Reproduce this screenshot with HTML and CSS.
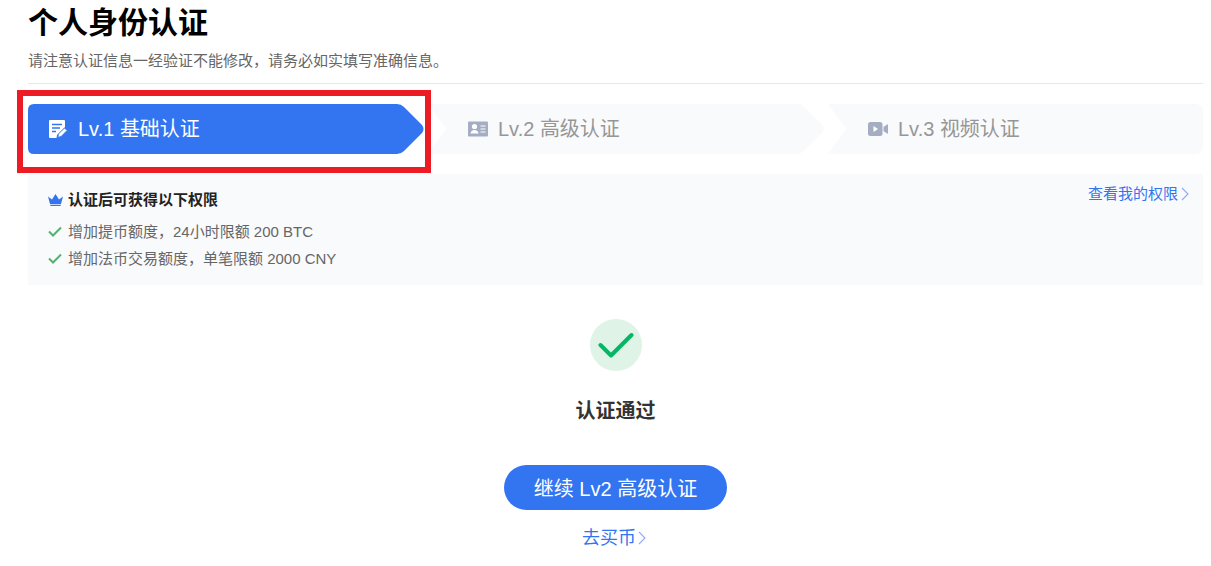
FILE: index.html
```html
<!DOCTYPE html>
<html lang="zh-CN">
<head>
<meta charset="utf-8">
<title>个人身份认证</title>
<link rel="stylesheet" href="styles.css">
</head>
<body>
<main class="page">
  <h1 class="title">个人身份认证</h1>
  <p class="subtitle">请注意认证信息一经验证不能修改，请务必如实填写准确信息。</p>
  <div class="steps">
    <div class="step step-first active">
      <svg class="step-bg" viewBox="0 0 397 50" preserveAspectRatio="none"><path fill="#3375f0" d="M6 0H369Q373 0 376 3L394 21Q397 25 394 29L376 47Q373 50 369 50H6Q0 50 0 44V6Q0 0 6 0Z"/></svg>
      <svg class="step-icon" viewBox="0 0 18 18"><path fill="#fff" d="M1 0H15Q16 0 16 1V7L8 15 7.500 18H1Q0 18 0 17V1Q0 0 1 0Z"/><path stroke="#3375f0" stroke-width="1.300" d="M3 4.500H13M3 8H11M3 11.500H7"/><path fill="#fff" stroke="#3375f0" stroke-width=".7" d="M9.500 14 15.500 8 18 10.500 12 16.500 9 17.200Z"/></svg>
      <span>Lv.1 基础认证</span>
    </div>
    <div class="step">
      <svg class="step-bg" viewBox="0 0 397 50" preserveAspectRatio="none"><path fill="#f9fafc" d="M0 0H369Q373 0 376 3L394 21Q397 25 394 29L376 47Q373 50 369 50H0L18 25Z"/></svg>
      <svg class="step-icon" viewBox="0 0 20 15"><rect width="20" height="15" rx="1" fill="#a4adc2"/><circle cx="6.500" cy="5" r="2.600" fill="#fff"/><path fill="#fff" d="M2.500 12Q3 8.500 6.500 8.500T10.500 12Z"/><path stroke="#fff" stroke-width="1.200" d="M12.500 4.500H17.500M12.500 7.500H17.500M12.500 10.500H17.500"/></svg>
      <span>Lv.2 高级认证</span>
    </div>
    <div class="step step-last">
      <svg class="step-bg" viewBox="0 0 375 50" preserveAspectRatio="none"><path fill="#f9fafc" d="M0 0H367Q375 0 375 8V42Q375 50 367 50H0L18 25Z"/></svg>
      <svg class="step-icon" viewBox="0 0 20 14"><rect width="14.500" height="14" rx="2.500" fill="#a4adc2"/><path fill="#fff" d="M5.500 4 10 7 5.500 10Z"/><path fill="#a4adc2" d="M15.500 5 19 2.500Q20 2 20 3V11Q20 12 19 11.500L15.500 9Z"/></svg>
      <span>Lv.3 视频认证</span>
    </div>
  </div>
  <section class="perks">
    <a class="perks-link" href="#">查看我的权限<svg class="chev" viewBox="0 0 8 14"><path d="M1 1 7 7 1 13"/></svg></a>
    <h2 class="perks-title"><svg class="crown" viewBox="0 0 15 12"><path fill="#3375f0" d="M0 2.500 4 5.500 7.500 0 11 5.500 15 2.500 13 10H2ZM2.300 10.800H12.700V12H2.300Z"/></svg>认证后可获得以下权限</h2>
    <ul class="perks-list">
      <li><svg class="tick" viewBox="0 0 14 11"><path d="M1 5.500 5 9.500 13 1.500"/></svg>增加提币额度，24小时限额 200 BTC</li>
      <li><svg class="tick" viewBox="0 0 14 11"><path d="M1 5.500 5 9.500 13 1.500"/></svg>增加法币交易额度，单笔限额 2000 CNY</li>
    </ul>
  </section>
  <section class="result">
    <div class="result-badge"><svg viewBox="0 0 36 26"><path d="M2.500 13 13 23.500 33.500 3"/></svg></div>
    <h3 class="result-title">认证通过</h3>
    <button class="cta" type="button">继续 Lv2 高级认证</button>
    <a class="buy" href="#">去买币<svg class="chev" viewBox="0 0 8 14"><path d="M1 1 7 7 1 13"/></svg></a>
  </section>
</main>
<div class="highlight"></div>
</body>
</html>
```

FILE: styles.css
```css
* { box-sizing: border-box; }
html, body { margin: 0; height: 100%; overflow: hidden; background: #fff; }
body { font-family: "Liberation Sans", "Noto Sans CJK SC", sans-serif; color: #222; }
.page { padding: 0 8px 0 28px; }
.title { margin: 0; font-size: 30px; line-height: 45px; font-weight: 700; color: #000; }
.subtitle { margin: 6px 0 0; padding-bottom: 12px; font-size: 15px; line-height: 20px; color: #666; border-bottom: 1px solid #e8e8ea; }
.steps { display: flex; gap: 3px; margin-top: 20px; height: 50px; }
.step { position: relative; width: 397px; flex: none; display: flex; align-items: center; padding-left: 40px; font-size: 20px; line-height: 28px; color: #969696; }
.step-first { padding-left: 20px; color: #fff; }
.step-last { width: 375px; }
.step-bg { position: absolute; inset: 0; width: 100%; height: 100%; }
.step-icon { position: relative; width: 20px; height: 18px; margin-right: 10px; flex: none; }
.step span { position: relative; }
.perks { position: relative; margin-top: 20px; height: 111px; padding: 16px 20px 0; background: #f9fafc; }
.perks-link { position: absolute; right: 14px; top: 10px; font-size: 15px; line-height: 20px; color: #3375f0; text-decoration: none; display: flex; align-items: center; gap: 3px; }
.chev { width: 8px; height: 14px; fill: none; stroke: #8fa9f5; stroke-width: 1.100; }
.perks-title { margin: 0; font-size: 15px; line-height: 20px; font-weight: 700; color: #222; display: flex; align-items: center; gap: 5px; }
.crown { width: 15px; height: 12px; }
.perks-list { list-style: none; margin: 8px 0 0; padding: 0; font-size: 15px; line-height: 27px; color: #666; }
.perks-list li { display: flex; align-items: center; gap: 6px; }
.tick { width: 14px; height: 11px; fill: none; stroke: #52b36f; stroke-width: 2; }
.result { display: flex; flex-direction: column; align-items: center; padding-top: 34px; }
.result-badge { width: 52px; height: 52px; border-radius: 50%; background: #dff3e7; display: flex; align-items: center; justify-content: center; }
.result-badge svg { width: 36px; height: 26px; fill: none; stroke: #05b765; stroke-width: 4; stroke-linecap: round; stroke-linejoin: round; }
.result-title { margin: 26px 0 0; font-size: 20px; line-height: 28px; font-weight: 700; color: #333; }
.cta { margin-top: 40px; width: 223px; height: 45px; border: 0; border-radius: 23px; background: #3375f0; color: #fff; font: inherit; font-size: 20px; }
.buy { margin: 16px 3px 0 0; font-size: 18px; line-height: 24px; color: #3375f0; text-decoration: none; display: flex; align-items: center; gap: 2px; }
.highlight { position: absolute; left: 17px; top: 90px; width: 414px; height: 83px; border: 6px solid #ed1c24; pointer-events: none; }
```
